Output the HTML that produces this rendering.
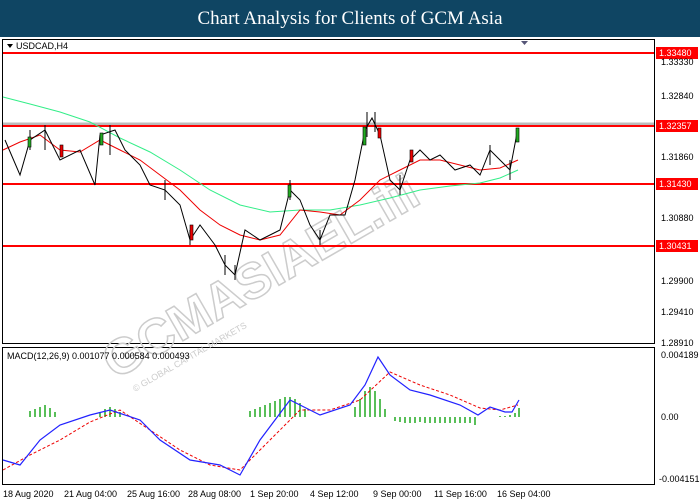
<!DOCTYPE html>
<html><head><meta charset="utf-8"><style>
body{margin:0;width:700px;height:500px;background:#fff;overflow:hidden;font-family:"Liberation Sans",sans-serif}
.hd{position:absolute;left:0;top:0;width:700px;height:37px;background:#0f4563;color:#fff;font-family:"Liberation Serif",serif;font-size:19px;text-align:center;line-height:37px}
svg{position:absolute;left:0;top:0}
text{font-family:"Liberation Sans",sans-serif;font-size:9px}
</style></head><body>
<div class="hd">Chart Analysis for Clients of GCM Asia</div>
<svg width="700" height="500" viewBox="0 0 700 500">
<rect x="2.5" y="39.5" width="652" height="304" fill="#fff" stroke="#000"/>
<rect x="2.5" y="347.5" width="652" height="137" fill="#fff" stroke="#000"/>
<text x="115" y="380" fill="none" stroke="#ccc" stroke-width="1.5" font-weight="bold" transform="rotate(-30 115 380)" style="font-size:50px">GCMASIAEL.iii</text>
<text x="135" y="392" fill="#ccc" transform="rotate(-30 135 392)">© GLOBAL CAPITAL MARKETS</text>
<line x1="3" y1="124" x2="654" y2="124" stroke="#bbb" stroke-width="3"/>
<line x1="3" y1="53" x2="654" y2="53" stroke="#f00" stroke-width="2"/>
<line x1="3" y1="126" x2="654" y2="126" stroke="#f00" stroke-width="2"/>
<line x1="3" y1="184" x2="654" y2="184" stroke="#f00" stroke-width="2"/>
<line x1="3" y1="246" x2="654" y2="246" stroke="#f00" stroke-width="2"/>
<polyline fill="none" stroke="#3e8" stroke-width="1" points="3,97 30,104 60,112 90,122 120,138 150,152 180,170 210,190 240,205 270,212 300,210 330,210 360,205 390,198 420,190 450,186 480,183 500,178 518,170"/>
<polyline fill="none" stroke="#e00" stroke-width="1" points="3,150 20,142 40,135 60,150 80,152 100,140 120,150 140,160 160,175 180,190 200,210 220,225 240,235 260,240 280,235 300,210 320,212 340,215 360,200 380,180 400,170 420,160 440,160 460,165 480,170 500,168 518,160"/>
<polyline fill="none" stroke="#000" stroke-width="1" points="5,140 20,175 30,140 45,130 60,160 80,150 95,185 100,135 115,130 125,150 140,165 150,185 165,190 180,205 190,240 200,225 215,245 225,265 235,275 245,230 260,240 270,235 280,230 290,190 300,200 310,225 320,240 330,215 345,215 355,180 365,130 372,118 380,135 390,180 400,190 410,160 420,150 430,160 440,155 455,170 470,165 480,175 490,150 500,160 510,170 518,128"/>
<g stroke="#000" stroke-width="1"><path d="M30 130v20M45 125v25M110 125v30M165 180v20M190 230v15M225 255v20M235 265v15M290 180v20M320 230v15M367 112v25M375 112v20M400 175v20M490 145v20M510 160v20"/></g>
<g fill="#2a2" stroke="#000" stroke-width=".6"><rect x="28" y="137" width="3" height="10"/><rect x="100" y="133" width="3" height="12"/><rect x="288" y="185" width="3" height="12"/><rect x="363" y="127" width="3" height="18"/><rect x="516" y="128" width="3" height="14"/></g>
<g fill="#e00" stroke="#000" stroke-width=".6"><rect x="60" y="145" width="3" height="12"/><rect x="190" y="225" width="3" height="15"/><rect x="378" y="128" width="3" height="10"/><rect x="410" y="150" width="3" height="12"/></g>
<path d="M7 44 l6 0 l-3 4z" fill="#000"/>
<path d="M521 41 l7 0 l-3.5 4z" fill="#557"/>
<text x="16" y="49">USDCAD,H4</text>
<text x="7" y="359">MACD(12,26,9) 0.001077 0.000584 0.000493</text>
<g stroke="#2a2" stroke-width="1.5">
<path d="M30 417v-6M35 417v-8M40 417v-10M45 417v-12M50 417v-9M55 417v-5M100 417v-5M105 417v-8M110 417v-10M115 417v-8M120 417v-5M250 417v-6M255 417v-8M260 417v-10M265 417v-12M270 417v-14M275 417v-16M280 417v-18M285 417v-20M290 417v-20M295 417v-18M300 417v-14M305 417v-8M355 417v-10M360 417v-18M365 417v-26M370 417v-30M375 417v-26M380 417v-18M385 417v-8M395 417v4M400 417v5M405 417v6M410 417v6M415 417v6M420 417v5M425 417v6M430 417v6M435 417v6M440 417v6M445 417v6M450 417v6M455 417v6M460 417v6M465 417v6M470 417v6M475 417v8M500 417v-1M505 417v-1M510 417v-2M515 417v-4M519 417v-9"/>
</g>
<polyline fill="none" stroke="#e00" stroke-dasharray="3,2" points="3,470 30,455 60,440 90,422 120,410 150,430 180,450 210,465 240,470 270,440 300,410 330,410 360,400 390,372 420,385 450,395 480,408 500,410 518,405"/>
<polyline fill="none" stroke="#22f" stroke-width="1.2" points="3,460 20,465 40,440 60,425 90,415 110,410 140,420 160,440 190,460 220,465 240,475 260,440 290,400 320,415 350,405 365,385 378,357 390,375 410,390 430,395 460,405 478,415 490,407 505,412 512,412 519,400"/>
<g font-size="9">
<rect x="656" y="47" width="42" height="12" fill="#f00"/><text x="659" y="56" fill="#fff">1.33480</text>
<text x="661" y="65">1.33330</text><text x="661" y="99">1.32840</text>
<rect x="656" y="120" width="42" height="12" fill="#f00"/><text x="659" y="129" fill="#fff">1.32357</text>
<text x="661" y="160">1.31860</text>
<rect x="656" y="178" width="42" height="12" fill="#f00"/><text x="659" y="187" fill="#fff">1.31430</text>
<text x="661" y="221">1.30880</text>
<rect x="656" y="240" width="42" height="12" fill="#f00"/><text x="659" y="249" fill="#fff">1.30431</text>
<text x="661" y="284">1.29900</text><text x="661" y="315">1.29410</text><text x="661" y="346">1.28910</text>
<text x="661" y="358">0.004189</text><text x="661" y="420">0.00</text><text x="659" y="482">-0.004151</text>
<text x="3" y="497">18 Aug 2020</text><text x="64" y="497">21 Aug 04:00</text><text x="127" y="497">25 Aug 16:00</text>
<text x="188" y="497">28 Aug 08:00</text><text x="250" y="497">1 Sep 20:00</text><text x="310" y="497">4 Sep 12:00</text>
<text x="373" y="497">9 Sep 00:00</text><text x="434" y="497">11 Sep 16:00</text><text x="497" y="497">16 Sep 04:00</text>
</g>
</svg>
</body></html>
